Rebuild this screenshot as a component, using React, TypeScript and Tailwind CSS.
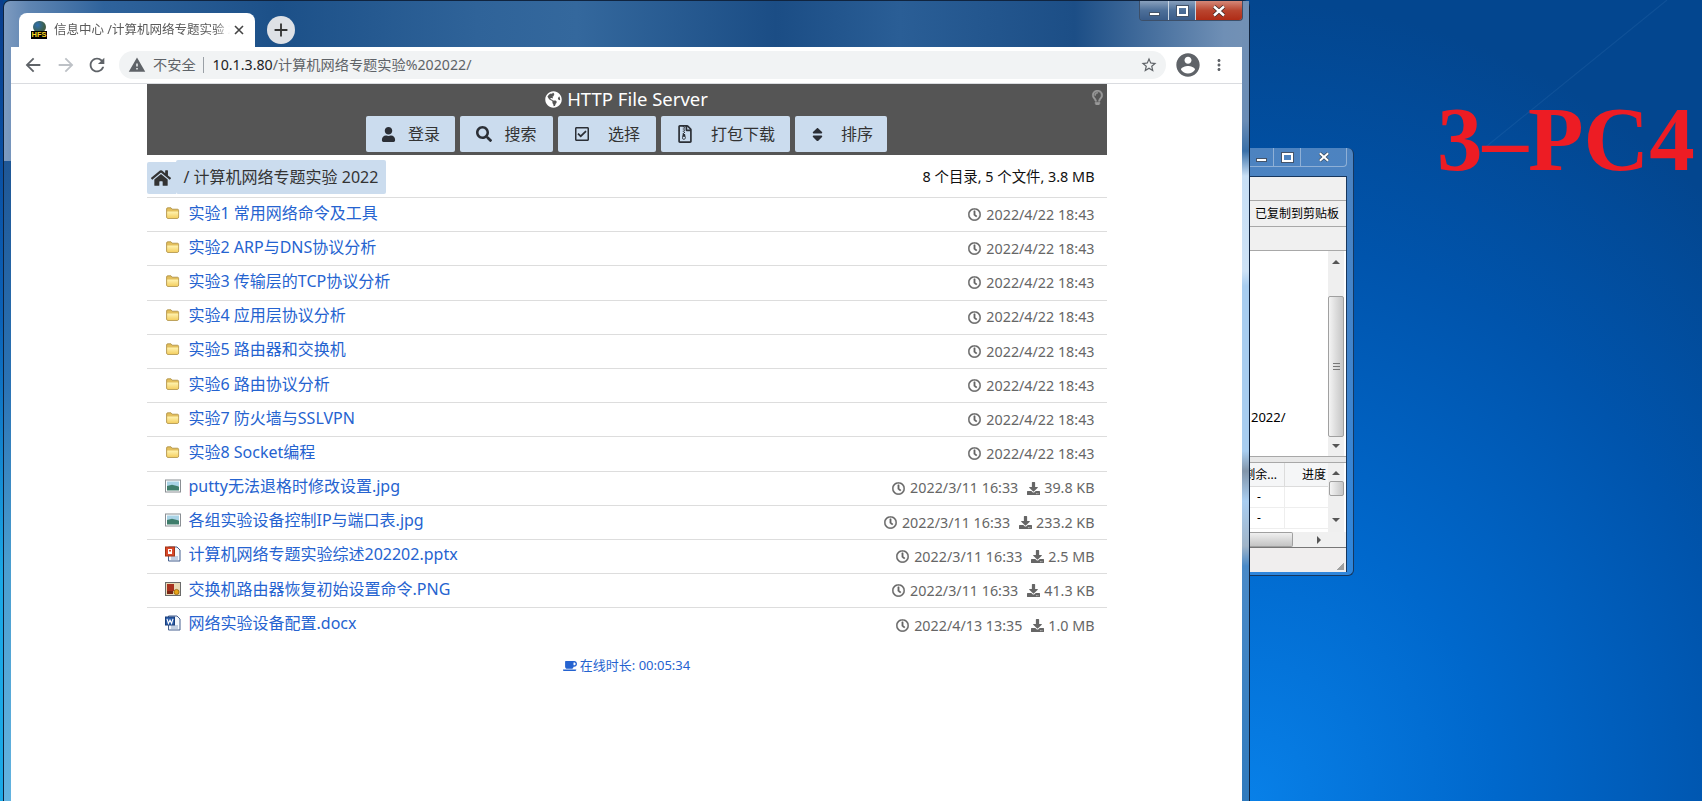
import React from 'react';
import {
  FaUser,
  FaSearch,
  FaRegCheckSquare,
  FaRegFileArchive,
  FaSort,
  FaHome,
  FaRegClock,
  FaDownload,
  FaCoffee,
  FaRegLightbulb,
  FaGlobeAmericas,
} from 'react-icons/fa';

const cjk = "font-['Noto_Sans','Noto_Sans_CJK_SC',sans-serif]";

const FolderIcon = () => (
  <svg width="16" height="16" viewBox="0 0 16 16" className="shrink-0">
    <defs>
      <linearGradient id="folderFront" x1="0" y1="0" x2="0" y2="1">
        <stop offset="0" stopColor="#fff3b0" />
        <stop offset="1" stopColor="#f4cf62" />
      </linearGradient>
    </defs>
    <path d="M1.6 4 Q1.6 2.8 2.8 2.8 H6 L7.2 4.2 H12.4 Q13.6 4.2 13.6 5.4 V12 Q13.6 13.4 12.2 13.4 H3 Q1.6 13.4 1.6 12 Z" fill="#e3bf5c" stroke="#a98a3c" strokeWidth="0.8" />
    <path d="M2.2 6.6 H13.2 V12 Q13.2 13 12.2 13 H3.2 Q2.2 13 2.2 12 Z" fill="url(#folderFront)" />
  </svg>
);

const ImageIcon = () => (
  <svg width="16" height="16" viewBox="0 0 16 16" className="shrink-0">
    <rect x="0.5" y="2" width="15" height="12" fill="#fff" stroke="#8a8f94" />
    <rect x="2" y="3.5" width="12" height="4.5" fill="#a9d3e6" />
    <path d="M2 8 L7 6.8 L14 8.4 V12.5 H2 Z" fill="#3f7d6b" />
  </svg>
);

const PptIcon = () => (
  <svg width="16" height="16" viewBox="0 0 16 16" className="shrink-0">
    <path d="M3.5 1 H12 L15 4 V15 H3.5 Z" fill="#f4f7fb" stroke="#47618f" />
    <path d="M6 11 H13 M6 13 H13" stroke="#8fa6c8" />
    <rect x="0.5" y="1" width="9" height="9" fill="#d9482b" stroke="#a33312" />
    <rect x="3" y="3" width="4" height="5" fill="#fff" />
    <rect x="4" y="4" width="2" height="1.5" fill="#d9482b" />
  </svg>
);

const PngIcon = () => (
  <svg width="16" height="16" viewBox="0 0 16 16" className="shrink-0">
    <rect x="0.5" y="1.5" width="15" height="13" fill="#e8d9b5" stroke="#6b6b6b" />
    <rect x="2" y="3" width="7" height="7" fill="#a8321f" />
    <circle cx="11.5" cy="11" r="2.6" fill="#e8a317" stroke="#704400" strokeWidth="0.6" />
    <rect x="2" y="10" width="6" height="3" fill="#7a2615" />
  </svg>
);

const WordIcon = () => (
  <svg width="16" height="16" viewBox="0 0 16 16" className="shrink-0">
    <path d="M3.5 1 H12 L15 4 V15 H3.5 Z" fill="#f4f7fb" stroke="#47618f" />
    <path d="M6 11 H13 M6 13 H13" stroke="#8fa6c8" />
    <rect x="0.5" y="2" width="9" height="8" fill="#2a5caa" stroke="#1b3f7a" />
    <path d="M2 3.8 L3.4 8.4 L5 5 L6.6 8.4 L8 3.8" fill="none" stroke="#fff" strokeWidth="1.1" />
  </svg>
);

const rows = [
  { icon: <FolderIcon />, name: '实验1 常用网络命令及工具', date: '2022/4/22 18:43' },
  { icon: <FolderIcon />, name: '实验2 ARP与DNS协议分析', date: '2022/4/22 18:43' },
  { icon: <FolderIcon />, name: '实验3 传输层的TCP协议分析', date: '2022/4/22 18:43' },
  { icon: <FolderIcon />, name: '实验4 应用层协议分析', date: '2022/4/22 18:43' },
  { icon: <FolderIcon />, name: '实验5 路由器和交换机', date: '2022/4/22 18:43' },
  { icon: <FolderIcon />, name: '实验6 路由协议分析', date: '2022/4/22 18:43' },
  { icon: <FolderIcon />, name: '实验7 防火墙与SSLVPN', date: '2022/4/22 18:43' },
  { icon: <FolderIcon />, name: '实验8 Socket编程', date: '2022/4/22 18:43' },
  { icon: <ImageIcon />, name: 'putty无法退格时修改设置.jpg', date: '2022/3/11 16:33', size: '39.8 KB' },
  { icon: <ImageIcon />, name: '各组实验设备控制IP与端口表.jpg', date: '2022/3/11 16:33', size: '233.2 KB' },
  { icon: <PptIcon />, name: '计算机网络专题实验综述202202.pptx', date: '2022/3/11 16:33', size: '2.5 MB' },
  { icon: <PngIcon />, name: '交换机路由器恢复初始设置命令.PNG', date: '2022/3/11 16:33', size: '41.3 KB' },
  { icon: <WordIcon />, name: '网络实验设备配置.docx', date: '2022/4/13 13:35', size: '1.0 MB', last: true },
];

const buttons = [
  { icon: <FaUser size={15} />, label: '登录', w: 'w-[89px]', gap: 'gap-[12px]' },
  { icon: <FaSearch size={16} />, label: '搜索', w: 'w-[93px]', gap: 'gap-[12px]' },
  { icon: <FaRegCheckSquare size={16} />, label: '选择', w: 'w-[98px]', gap: 'gap-[18px]' },
  { icon: <FaRegFileArchive size={18} />, label: '打包下载', w: 'w-[129px]', gap: 'gap-[17px]' },
  { icon: <FaSort size={17} />, label: '排序', w: 'w-[92px]', gap: 'gap-[15px]' },
];

function MatIcon({ d, size = 20, className = '' }: { d: string; size?: number; className?: string }) {
  return (
    <svg width={size} height={size} viewBox="0 0 24 24" fill="currentColor" className={className}>
      <path d={d} />
    </svg>
  );
}

function FileServer() {
  return (
    <div className="w-[960px] mx-auto text-[#333]">
      <div className="bg-[#555] h-[71px] relative flex flex-col items-center">
        <div className="h-[30px] mb-[2px] flex items-center gap-[5px] text-white text-[18.5px] leading-none">
          <FaGlobeAmericas size={17} />
          <span>HTTP File Server</span>
        </div>
        <FaRegLightbulb size={15} className="absolute right-[2px] top-[6px] text-[#999] [stroke-width:20]" />
        <div className="flex gap-[5px]">
          {buttons.map((b) => (
            <div key={b.label} className={`${b.w} ${b.gap} h-[36px] bg-[#cbdcee] rounded-[2px] flex items-center justify-center text-[16px] text-[#333]`}>
              <span className="text-[#2b2f36]">{b.icon}</span>
              <span>{b.label}</span>
            </div>
          ))}
        </div>
      </div>

      <div className="h-[43px] border-b border-[#ddd] flex items-start justify-between pt-[5px] pr-[12px]">
        <div className="flex items-center">
          <div className="w-[29px] h-[32px] mt-[1px] bg-[#cbdcee] rounded-l-[2px] flex items-center justify-center text-[#333]">
            <FaHome size={20} />
          </div>
          <div className="h-[34px] bg-[#cbdcee] rounded-[2px] flex items-center pl-[8px] pr-[8px] pb-[1px] text-[16px]">
            / 计算机网络专题实验 2022
          </div>
        </div>
        <div className="h-[34px] pb-[1px] flex items-center text-[14.4px] text-[#111]">8 个目录, 5 个文件, 3.8 MB</div>
      </div>

      {rows.map((r) => (
        <div key={r.name} className={`h-[34.2px] ${r.last ? '' : 'border-b border-[#ddd]'} flex items-center justify-between pl-[18px] pr-[12px]`}>
          <div className="flex items-center gap-[8px] pb-[4px] text-[16px] text-[#2563d0]">
            {r.icon}
            <span>{r.name}</span>
          </div>
          <div className="flex items-center text-[14.3px] text-[#666]">
            <FaRegClock size={13} className="mr-[5px] [stroke-width:15]" />
            <span>{r.date}</span>
            {r.size && (
              <>
                <FaDownload size={13} className="ml-[9px] mr-[4px]" />
                <span>{r.size}</span>
              </>
            )}
          </div>
        </div>
      ))}

      <div className="mt-[14px] flex items-center justify-center gap-[3px] text-[13px] text-[#2563d0]">
        <FaCoffee size={14} />
        <span>在线时长: 00:05:34</span>
      </div>
    </div>
  );
}

function ChromeWindow() {
  return (
    <div className="absolute left-[3px] top-0 w-[1247px] h-[801px] rounded-t-[7px] border-x border-t border-[#10243f] pl-[7px] pr-[7px] bg-[linear-gradient(90deg,#7e9bc0_0%,#5f85b2_2%,#2f639c_8%,#1c5088_22%,#2f6399_38%,#34689d_46%,#1b4d85_62%,#2a5e96_72%,#1c4e86_86%,#6f8fb5_98%,#7391b5_100%)]">
      <div className="absolute right-0 top-0 w-[7px] h-[800px] bg-[linear-gradient(180deg,#7391b5_0px,#6a8cb5_120px,#3a70a8_150px,#c8dff5_175px,#cde2f6_270px,#a8cdf0_285px,#a8cdf0_450px,#8295aa_470px,#a9cdf0_500px,#a0b4c8_545px,#4a8ac8_565px,#2f7abd_800px)]" />
      <div className="absolute left-0 top-[160px] w-[7px] h-[640px] bg-[linear-gradient(180deg,#1f5796_0%,#2b73b5_35%,#4a9ed0_63%,#63b3e0_100%)]" />

      <div className="h-[46px] relative">
        <div className="absolute left-[8px] top-[12px] w-[236px] h-[34px] bg-white rounded-t-[8px] flex items-center pl-[12px] pr-[6px]">
          <div className="w-[16px] h-[18px] flex flex-col items-center justify-end shrink-0">
            <div className="w-[13px] h-[12px] rounded-full bg-[radial-gradient(circle_at_35%_35%,#2f6fb0,#3c5f4a_60%,#6b5a3c)] -mb-[2px]" />
            <div className="w-[16px] h-[8px] bg-black text-[#f8d820] text-[7.5px] leading-[8px] font-bold text-center font-['Liberation_Sans']">HFS</div>
          </div>
          <div className="ml-[7px] w-[176px] overflow-hidden whitespace-nowrap text-[12.5px] text-[#5a5a5a] [mask-image:linear-gradient(90deg,#000_92%,transparent)]">
            信息中心 /计算机网络专题实验 2022
          </div>
          <svg width="10" height="10" viewBox="0 0 10 10" className="ml-[4px] shrink-0">
            <path d="M1 1 L9 9 M9 1 L1 9" stroke="#444" strokeWidth="1.6" />
          </svg>
        </div>
        <div className="absolute left-[256px] top-[15px] w-[28px] h-[28px] rounded-full bg-[#dee1e6] flex items-center justify-center">
          <MatIcon d="M19 13h-6v6h-2v-6H5v-2h6V5h2v6h6v2z" size={22} className="text-[#333]" />
        </div>
      </div>

      <div className="h-[37px] bg-white border-b border-[#dadce0] flex items-center relative">
        <div className="w-[108px] flex items-center pl-[11px] shrink-0">
          <MatIcon d="M20 11H7.83l5.59-5.59L12 4l-8 8 8 8 1.41-1.41L7.83 13H20v-2z" size={22} className="text-[#5f6368]" />
          <MatIcon d="M12 4l-1.41 1.41L16.17 11H4v2h12.17l-5.58 5.59L12 20l8-8z" size={22} className="ml-[11px] text-[#bdc1c6]" />
          <MatIcon d="M17.65 6.35C16.2 4.9 14.21 4 12 4c-4.42 0-7.99 3.58-7.99 8s3.57 8 7.99 8c3.73 0 6.84-2.55 7.73-6h-2.08c-.82 2.33-3.04 4-5.65 4-3.31 0-6-2.69-6-6s2.69-6 6-6c1.66 0 3.14.69 4.22 1.78L13 11h7V4l-2.35 2.35z" size={22} className="ml-[9px] text-[#5f6368]" />
        </div>
        <div className="w-[1047px] h-[28px] rounded-full bg-[#f1f3f4] flex items-center pl-[9px] pr-[8px] text-[14.2px]">
          <MatIcon d="M1 21h22L12 2 1 21zm12-3h-2v-2h2v2zm0-4h-2v-4h2v4z" size={18} className="text-[#5f6368]" />
          <span className="ml-[7px] text-[#5f6368]">不安全</span>
          <span className="ml-[7px] mr-[9px] w-px h-[16px] bg-[#9aa0a6]" />
          <span className="text-[#202124]">10.1.3.80</span>
          <span className="text-[#5f6368]">/计算机网络专题实验%202022/</span>
          <MatIcon d="M22 9.24l-7.19-.62L12 2 9.19 8.63 2 9.24l5.46 4.73L5.82 21 12 17.27 18.18 21l-1.63-7.03L22 9.24zM12 15.4l-3.76 2.27 1-4.28-3.32-2.88 4.38-.38L12 6.1l1.71 4.04 4.38.38-3.32 2.88 1 4.28L12 15.4z" size={18} className="ml-auto text-[#5f6368]" />
        </div>
        <MatIcon d="M12 2C6.48 2 2 6.48 2 12s4.48 10 10 10 10-4.48 10-10S17.52 2 12 2zm0 3c1.66 0 3 1.34 3 3s-1.34 3-3 3-3-1.34-3-3 1.34-3 3-3zm0 14.2c-2.5 0-4.71-1.28-6-3.22.03-1.99 4-3.08 6-3.08 1.99 0 5.97 1.09 6 3.08-1.29 1.94-3.5 3.22-6 3.22z" size={28} className="ml-[8px] text-[#5f6368]" />
        <MatIcon d="M12 8c1.1 0 2-.9 2-2s-.9-2-2-2-2 .9-2 2 .9 2 2 2zm0 2c-1.1 0-2 .9-2 2s.9 2 2 2 2-.9 2-2-.9-2-2-2zm0 6c-1.1 0-2 .9-2 2s.9 2 2 2 2-.9 2-2-.9-2-2-2z" size={18} className="ml-[8px] text-[#5f6368]" />
      </div>

      <div className="bg-white h-[717px] overflow-hidden">
        <FileServer />
      </div>

      <div className="absolute right-[6px] top-0 w-[104px] h-[20px] rounded-b-[4px] border border-t-0 border-[#3c4f69] flex overflow-hidden">
        <div className="w-[29px] border-r border-[#c8d4e2] bg-[linear-gradient(180deg,#88a0bd,#4d6f99_50%,#3a5c89)] flex items-end justify-center pb-[4px]">
          <div className="w-[11px] h-[4px] bg-white border border-[#44546a]" />
        </div>
        <div className="w-[27px] border-r border-[#c8d4e2] bg-[linear-gradient(180deg,#88a0bd,#4d6f99_50%,#3a5c89)] flex items-center justify-center">
          <div className="w-[11px] h-[10px] border-2 border-white outline outline-[#44546a]" />
        </div>
        <div className="flex-1 bg-[linear-gradient(180deg,#d58878,#b9452f_50%,#b02c16)] flex items-center justify-center">
          <svg width="14" height="12" viewBox="0 0 14 12">
            <path d="M2 1.5 L12 10.5 M12 1.5 L2 10.5" stroke="#3c2b2b" strokeWidth="4" />
            <path d="M2 1.5 L12 10.5 M12 1.5 L2 10.5" stroke="#fff" strokeWidth="2.4" />
          </svg>
        </div>
      </div>
    </div>
  );
}

function ArrowUp({ className = '' }: { className?: string }) {
  return <div className={`w-0 h-0 border-x-[4px] border-x-transparent border-b-[4px] border-b-[#555] ${className}`} />;
}

function ArrowDown({ className = '' }: { className?: string }) {
  return <div className={`w-0 h-0 border-x-[4px] border-x-transparent border-t-[4px] border-t-[#555] ${className}`} />;
}

function BackWindow() {
  return (
    <div className="absolute left-[1249px] top-[148px] w-[105px] h-[428px] rounded-tr-[6px] rounded-br-[6px] border-r border-b border-[#17375e] bg-[linear-gradient(180deg,#4d83c0,#3f85cf_60%,#2f86dc)] pr-[6px] pb-[3px] flex flex-col text-[12px] text-black">
      <div className="h-[28px] shrink-0">
        <div className="h-[19px] w-[98px] rounded-br-[4px] border-r border-b border-[#8fb0d6] flex">
          <div className="w-[25px] border-r border-[#8fb0d6] flex items-end justify-center pb-[4px]">
            <div className="w-[11px] h-[4px] bg-white border border-[#44546a]" />
          </div>
          <div className="w-[27px] border-r border-[#8fb0d6] flex items-center justify-center">
            <div className="w-[11px] h-[9px] border-2 border-white outline outline-[#44546a]" />
          </div>
          <div className="flex-1 flex items-center justify-center">
            <svg width="12" height="10" viewBox="0 0 14 12">
              <path d="M2 1.5 L12 10.5 M12 1.5 L2 10.5" stroke="#3c4b5b" strokeWidth="4" />
              <path d="M2 1.5 L12 10.5 M12 1.5 L2 10.5" stroke="#fff" strokeWidth="2.4" />
            </svg>
          </div>
        </div>
      </div>
      <div className="flex-1 border-t border-r border-[#17375e] bg-[#f0f0f0] flex flex-col min-h-0">
        <div className="h-[24px] shrink-0 border-b border-[#a8a8a8]" />
        <div className="h-[26px] shrink-0 border-b border-[#a8a8a8] flex items-center pl-[6px] whitespace-nowrap">已复制到剪贴板</div>
        <div className="h-[24px] shrink-0 border-b border-[#a8a8a8]" />
        <div className="h-[205px] shrink-0 bg-white flex justify-between overflow-hidden">
          <div className="pt-[157px] pl-[2px] text-[13px]">2022/</div>
          <div className="w-[16px] mr-[2px] bg-[#efefef] flex flex-col items-center">
            <ArrowUp className="mt-[9px]" />
            <div className="mt-[32px] w-[16px] h-[141px] rounded-[2px] border border-[#a0a0a0] bg-[linear-gradient(90deg,#f4f4f4,#dcdcdc_50%,#c6c6c6)] flex items-center justify-center">
              <div className="w-[7px] h-[7px] border-y border-[#777] bg-[linear-gradient(180deg,transparent_40%,#777_40%,#777_60%,transparent_60%)]" />
            </div>
            <ArrowDown className="mt-[7px]" />
          </div>
        </div>
        <div className="h-[7px] shrink-0 bg-[#e8e8e8] border-y border-[#a8a8a8]" />
        <div className="h-[69px] shrink-0 bg-white flex overflow-hidden">
          <div className="flex-1 min-w-0 flex flex-col">
            <div className="h-[24px] shrink-0 flex bg-[#f5f6f7] border-b border-[#dcdcdc]">
              <div className="w-[36px] border-r border-[#dcdcdc] flex justify-end pr-[7px] leading-[24px] whitespace-nowrap overflow-hidden">剩余...</div>
              <div className="flex-1 text-right pr-[2px] leading-[24px]">进度</div>
            </div>
            <div className="h-[21px] shrink-0 flex border-b border-[#eee]">
              <div className="w-[36px] border-r border-[#eee] pl-[8px] leading-[20px]">-</div>
            </div>
            <div className="h-[21px] shrink-0 flex border-b border-[#eee]">
              <div className="w-[36px] border-r border-[#eee] pl-[8px] leading-[20px]">-</div>
            </div>
          </div>
          <div className="w-[16px] mr-[2px] bg-[#efefef] flex flex-col items-center shrink-0">
            <ArrowUp className="mt-[8px]" />
            <div className="mt-[6px] w-[15px] h-[15px] rounded-[2px] border border-[#a0a0a0] bg-[linear-gradient(90deg,#f4f4f4,#c6c6c6)]" />
            <ArrowDown className="mt-[22px]" />
          </div>
        </div>
        <div className="h-[16px] shrink-0 bg-[#f0f0f0] flex items-center border-b border-[#777]">
          <div className="w-[44px] h-[15px] rounded-r-[2px] border border-l-0 border-[#a0a0a0] bg-[linear-gradient(180deg,#f0f0f0,#c4c4c4)]" />
          <div className="ml-[24px] w-0 h-0 border-y-[4px] border-y-transparent border-l-[4px] border-l-[#555]" />
        </div>
        <div className="flex-1 bg-[#f0eeee] flex items-end justify-end pr-[2px] pb-[2px]">
          <div className="w-[7px] h-[7px] bg-[linear-gradient(135deg,transparent_50%,#a0a0a0_50%)]" />
        </div>
      </div>
    </div>
  );
}

export default function App() {
  return (
    <div className={`relative w-[1702px] h-[801px] overflow-hidden ${cjk} bg-[radial-gradient(ellipse_700px_800px_at_1250px_801px,#0880e8_0%,#0068cc_35%,#0054ac_70%,#03468f_100%)]`}>
      <div className="absolute left-0 top-0 w-[3px] h-[801px] bg-[linear-gradient(180deg,#0a3d8c_0%,#0b62b8_40%,#1aa8e6_72%,#1aa8e6_100%)]" />
      <svg width="240" height="160" viewBox="0 0 240 160" className="absolute left-[1462px] top-0">
        <path d="M205 0 L20 150" stroke="#7fb0e0" strokeOpacity="0.1" strokeWidth="1.2" fill="none" />
      </svg>
      <div className="absolute left-[1437px] top-[94px] font-['Liberation_Serif',serif] font-bold text-[91px] leading-none text-[#ed1c24] whitespace-nowrap">
        3–PC4
      </div>
      <BackWindow />
      <ChromeWindow />
    </div>
  );
}
